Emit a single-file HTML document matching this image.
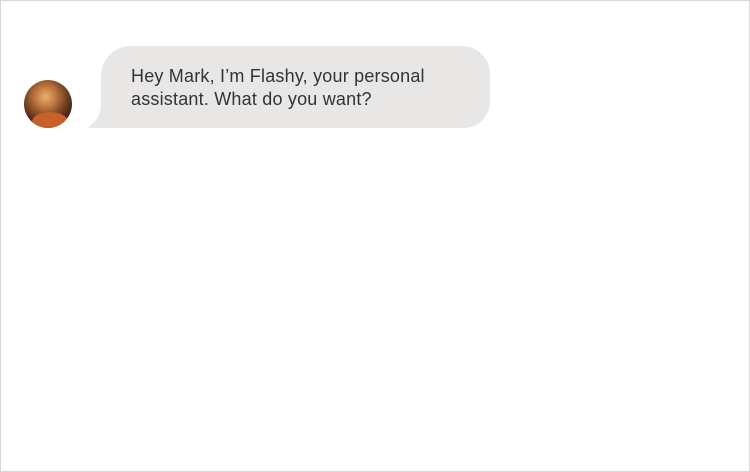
<!DOCTYPE html>
<html><head><meta charset="utf-8"><style>
html,body{margin:0;padding:0}
body{width:750px;height:472px;position:relative;overflow:hidden;background:#fff;font-family:"Liberation Sans",sans-serif}
.frame{position:absolute;left:0;top:0;width:748px;height:470px;border:1px solid #d6d6d6}
.av{position:absolute;left:24px;top:80px;width:48px;height:48px;border-radius:50%;background:radial-gradient(circle at 45% 35%,#e8b070 0,#c07840 25%,#6a3a20 55%,#2a1a12 80%);overflow:hidden}
.av:after{content:"";position:absolute;left:8px;top:32px;width:36px;height:20px;border-radius:50%;background:#c8602a}
svg{position:absolute;left:0;top:0}
.t{position:absolute;left:131px;top:65px;font-size:18px;line-height:23px;color:#333;letter-spacing:0.2px}
</style></head><body>
<div class="frame"></div>
<div class="av"></div>
<svg width="750" height="472"><path d="M131 46 H462 A28 28 0 0 1 490 74 V102 A26 26 0 0 1 464 128 H88 Q101 118 101 104 V76 A30 30 0 0 1 131 46 Z" fill="#e9e7e6"/></svg>
<div class="t">Hey Mark, I’m Flashy, your personal<br>assistant. What do you want?</div>
</body></html>
